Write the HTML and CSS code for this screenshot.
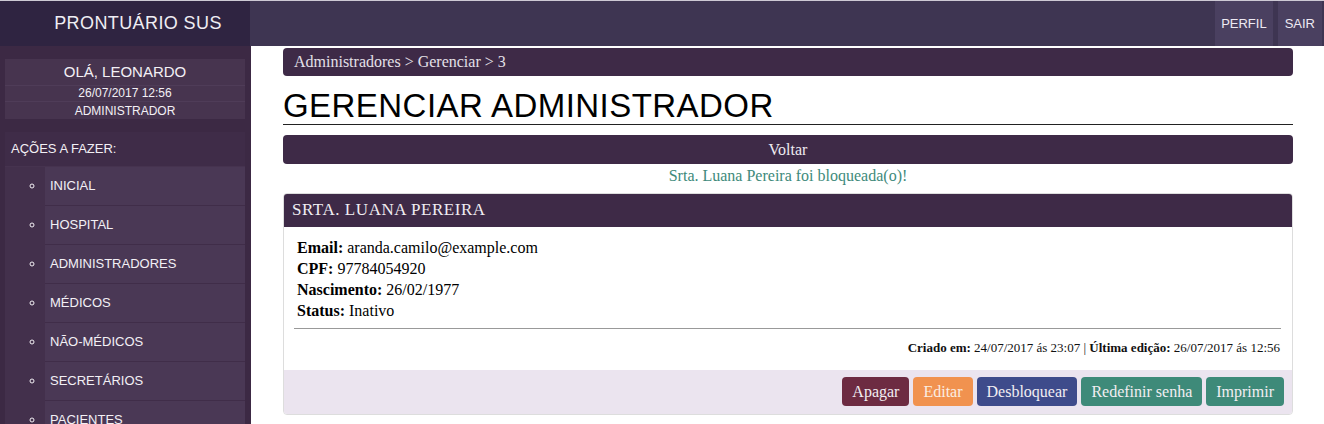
FILE: index.html
```html
<!DOCTYPE html>
<html lang="pt-BR">
<head>
<meta charset="utf-8">
<title>Prontuário SUS</title>
<link rel="stylesheet" href="styles.css">
</head>
<body>
<header class="navbar">
  <div class="brand">PRONTUÁRIO SUS</div>
  <div class="nav-space"></div>
  <nav class="nav-links">
    <a class="nav-link" href="#">PERFIL</a>
    <a class="nav-link" href="#">SAIR</a>
  </nav>
</header>
<div class="layout">
  <aside class="sidebar">
    <div class="user-box">
      <div class="user-row user-name">OLÁ, LEONARDO</div>
      <div class="user-row user-small">26/07/2017 12:56</div>
      <div class="user-row user-small">ADMINISTRADOR</div>
    </div>
    <div class="menu">
      <div class="menu-title">AÇÕES A FAZER:</div>
      <ul class="menu-list">
        <li class="menu-item">INICIAL</li>
        <li class="menu-item">HOSPITAL</li>
        <li class="menu-item">ADMINISTRADORES</li>
        <li class="menu-item">MÉDICOS</li>
        <li class="menu-item">NÃO-MÉDICOS</li>
        <li class="menu-item">SECRETÁRIOS</li>
        <li class="menu-item">PACIENTES</li>
      </ul>
    </div>
  </aside>
  <main class="main">
    <div class="breadcrumb">Administradores &gt; Gerenciar &gt; 3</div>
    <h1 class="page-title">GERENCIAR ADMINISTRADOR</h1>
    <a class="back-btn" href="#">Voltar</a>
    <p class="flash">Srta. Luana Pereira foi bloqueada(o)!</p>
    <section class="card">
      <div class="card-header">SRTA. LUANA PEREIRA</div>
      <div class="card-body">
        <div class="details">
          <div><b>Email:</b> aranda.camilo@example.com</div>
          <div><b>CPF:</b> 97784054920</div>
          <div><b>Nascimento:</b> 26/02/1977</div>
          <div><b>Status:</b> Inativo</div>
        </div>
        <hr class="divider">
        <div class="meta"><b>Criado em:</b> 24/07/2017 ás 23:07 | <b>Última edição:</b> 26/07/2017 ás 12:56</div>
      </div>
      <div class="card-footer">
        <a class="btn btn-red" href="#">Apagar</a>
        <a class="btn btn-orange" href="#">Editar</a>
        <a class="btn btn-blue" href="#">Desbloquear</a>
        <a class="btn btn-teal" href="#">Redefinir senha</a>
        <a class="btn btn-teal" href="#">Imprimir</a>
      </div>
    </section>
  </main>
</div>
</body>
</html>
```

FILE: styles.css
```css
* { box-sizing: border-box; }
html, body { margin: 0; padding: 0; height: 424px; overflow: hidden; }
body { background: #fff; font-family: "Liberation Serif", "Times New Roman", serif; color: #111; }

.navbar {
  display: flex;
  height: 46px;
  border-top: 1px solid #cdc9d4;
  background: #3e3552;
  font-family: "Liberation Sans", Arial, sans-serif;
}
.brand {
  width: 250px;
  background: #2f2441;
  color: #f0eef4;
  font-size: 18px;
  letter-spacing: 0.4px;
  line-height: 45px;
  text-align: center;
  padding-left: 26px;
}
.nav-space { flex: 1; }
.nav-links { display: flex; gap: 5px; padding-right: 2px; }
.nav-link {
  display: block;
  background: #4a4060;
  color: #eeeaf3;
  font-size: 13px;
  line-height: 45px;
  padding: 0 6px;
  text-decoration: none;
}
.nav-link + .nav-link { padding: 0 7px; }

.layout { display: flex; height: 378px; }
.sidebar {
  width: 251px;
  flex: none;
  background: #3c2944;
  padding: 13px 6px 0 5px;
  font-family: "Liberation Sans", Arial, sans-serif;
  color: #f3f0f5;
  overflow: hidden;
}
.user-box { background: #47344f; text-align: center; }
.user-row { border-top: 1px solid #4f3c58; }
.user-row:first-child { border-top: 0; }
.user-name { font-size: 15px; line-height: 18px; padding: 4px 0; }
.user-small { font-size: 12px; line-height: 15px; }
.user-small:last-child { line-height: 16px; padding-top: 1px; }

.menu { margin-top: 13px; }
.menu-title {
  background: #3f2c48;
  font-size: 13px;
  line-height: 16px;
  padding: 9px 6px;
  border-bottom: 1px solid #46334f;
}
.menu-list {
  margin: 0;
  padding: 0 0 0 40px;
  background: #43304c;
  list-style: circle;
}
.menu-item {
  background: #4a3855;
  border-bottom: 1px solid #402d49;
  font-size: 13px;
  line-height: 38px;
  height: 39px;
  padding-left: 5px;
}

.main {
  flex: 1;
  padding: 2px 31px 0 32px;
}
.breadcrumb {
  background: #3e2a47;
  color: #e4e0e8;
  border-radius: 4px;
  font-size: 16px;
  line-height: 28px;
  padding: 0 11px;
}
.page-title {
  margin: 12px 0 0;
  font-family: "Liberation Sans", Arial, sans-serif;
  font-weight: normal;
  font-size: 33px;
  letter-spacing: 0.45px;
  line-height: 36px;
  color: #000;
  border-bottom: 1px solid #222;
}
.back-btn {
  display: block;
  margin-top: 10px;
  background: #3e2a47;
  color: #eeeaf0;
  border-radius: 4px;
  text-align: center;
  font-size: 16px;
  line-height: 19px;
  padding: 5px 0;
  text-decoration: none;
}
.flash {
  margin: 2px 0 0;
  text-align: center;
  color: #3e8a7b;
  font-size: 16px;
  line-height: 19px;
}
.card {
  margin-top: 8px;
  border: 1px solid #ddd;
  border-radius: 4px;
  overflow: hidden;
}
.card-header {
  background: #3e2a47;
  color: #f0edf2;
  font-size: 17px;
  letter-spacing: 0.55px;
  line-height: 20px;
  padding: 7px 9px;
  margin: -1px -1px 0;
}
.card-body { padding: 10px 11px 13px 10px; }
.details { padding-left: 3px; font-size: 16px; line-height: 21px; color: #000; }
.divider {
  margin: 7px 0 0;
  border: 0;
  border-top: 1px solid #999;
  height: 0;
}
.meta {
  margin-top: 9px;
  text-align: right;
  font-size: 13px;
  line-height: 19px;
  color: #111;
  padding-right: 1px;
}
.card-footer {
  display: flex;
  justify-content: flex-end;
  gap: 4px;
  background: #ebe4ef;
  padding: 7px 8px 8px;
}
.btn {
  display: block;
  color: #f2eef2;
  border-radius: 4px;
  font-size: 16px;
  line-height: 19px;
  padding: 5px 10px;
  text-decoration: none;
}
.btn-red { background: #6d2b42; }
.btn-orange { background: #f1924f; color: #fbeee2; }
.btn-blue { background: #3e4b8b; }
.btn-teal { background: #3e8a79; }
```
